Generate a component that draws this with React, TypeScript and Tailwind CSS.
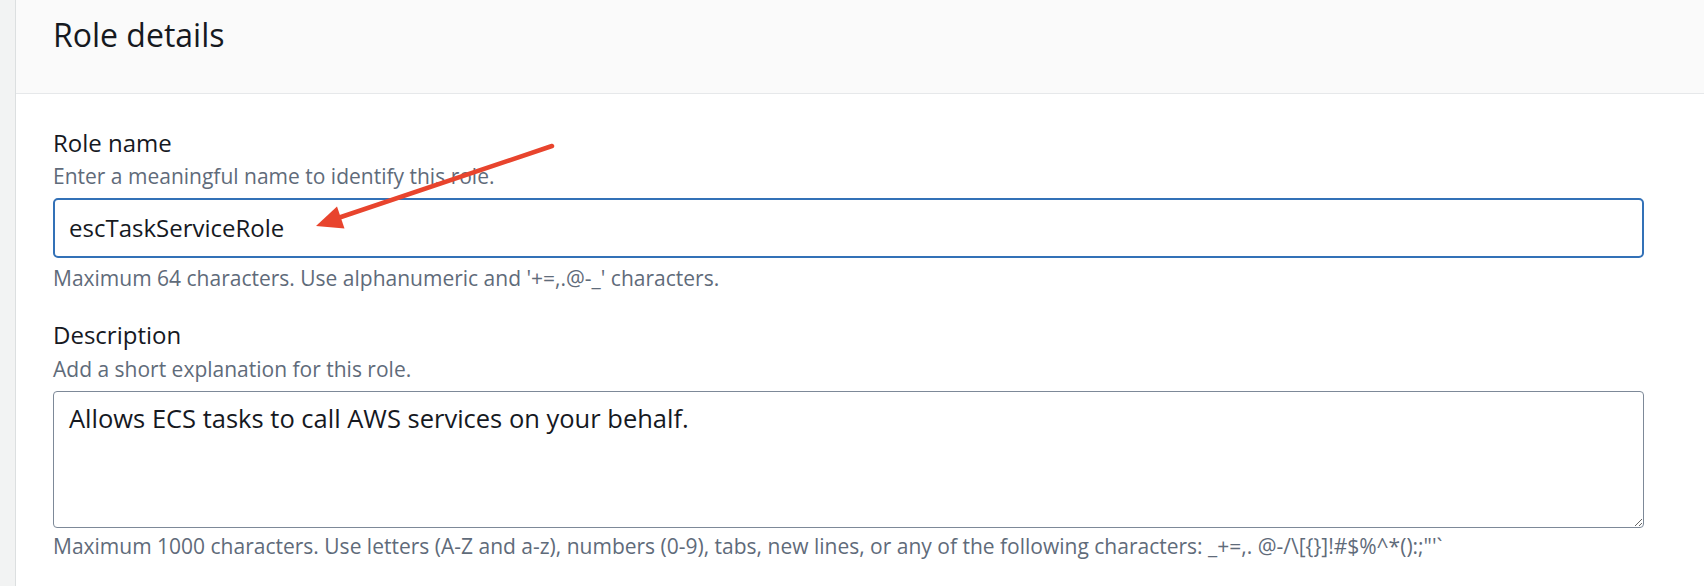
import React from "react";

export default function App() {
  return (
    <div className="relative flex h-[586px] w-full overflow-hidden bg-white font-['Open_Sans',_'Liberation_Sans',_sans-serif]">
      <div className="w-[16px] shrink-0 border-r border-[#dcdfe0] bg-[#f2f3f3]" />
      <div className="flex flex-1 flex-col">
        <div className="flex h-[94px] shrink-0 items-start border-b border-[#e6e8ea] bg-[#fafafa] pl-[37px] pt-[14px]">
          <h2 className="text-[32px] leading-[42px] font-normal text-[#16191f]">Role details</h2>
        </div>
        <div className="flex flex-col pl-[37px] pr-[60px] pt-[34px]">
          <label className="text-[24px] leading-[30px] text-[#16191f]">Role name</label>
          <div className="mt-[4px] text-[21px] leading-[28px] text-[#5f6b7a]">
            Enter a meaningful name to identify this role.
          </div>
          <input
            readOnly
            value="escTaskServiceRole"
            className="mt-[8px] h-[60px] w-full rounded-[5px] border-2 border-[#3371b7] bg-white px-[14px] pb-[1px] text-[24px] text-[#16191f] outline-none"
          />
          <div className="mt-[6px] text-[21px] leading-[28px] text-[#5f6b7a]">
            Maximum 64 characters. Use alphanumeric and '+=,.@-_' characters.
          </div>
          <label className="mt-[28px] text-[24px] leading-[30px] text-[#16191f]">Description</label>
          <div className="mt-[5px] text-[21px] leading-[28px] text-[#5f6b7a]">
            Add a short explanation for this role.
          </div>
          <textarea
            readOnly
            defaultValue="Allows ECS tasks to call AWS services on your behalf."
            className="mt-[8px] h-[137px] w-full resize rounded-[4px] border border-[#7d8998] bg-white px-[15px] pt-[10px] text-[25.5px] leading-[32px] text-[#16191f] outline-none"
          />
          <div className="mt-[4px] text-[21px] leading-[28px] text-[#5f6b7a]">
            Maximum 1000 characters. Use letters (A-Z and a-z), numbers (0-9), tabs, new lines, or any of the following characters: _+=,. @-/\[{"{}"}]!#$%^*():;"'`
          </div>
        </div>
      </div>
      <svg
        className="pointer-events-none absolute left-0 top-0 h-[586px] w-[1704px]"
        viewBox="0 0 1704 586"
      >
        <line x1="552" y1="146" x2="338" y2="218" stroke="#e8442d" strokeWidth="4.5" strokeLinecap="round" />
        <polygon points="316,226 337,206.5 344.5,228.5" fill="#e8442d" />
      </svg>
    </div>
  );
}
